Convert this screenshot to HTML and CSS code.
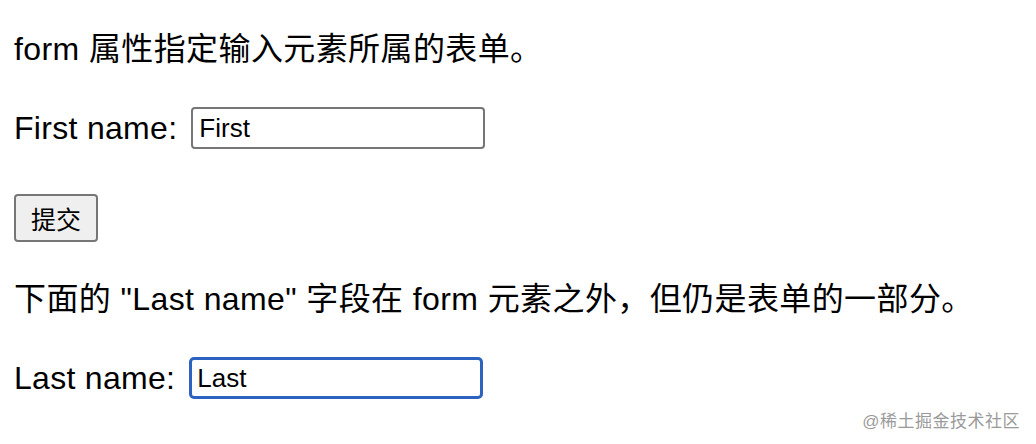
FILE: index.html
```html
<!DOCTYPE html>
<html lang="zh">
<head>
    <meta charset="UTF-8">
    <title>form 属性</title>
    <link rel="stylesheet" href="styles.css">
</head>
<body>
    <div class="page">
        <p class="note">form 属性指定输入元素所属的表单。</p>

        <form id="form1" class="demoForm">
            <div class="row">
                <label for="fname">First name:</label>
                <input type="text" id="fname" name="fname" class="field" value="First">
            </div>
            <div class="submitRow">
                <input type="submit" class="submitBtn" value="提交">
            </div>
        </form>

        <p class="note">下面的 "Last name" 字段在 form 元素之外，但仍是表单的一部分。</p>

        <div class="row">
            <label for="lname">Last name:</label>
            <input type="text" id="lname" name="lname" form="form1" class="field focused" value="Last">
        </div>
    </div>

    <div class="watermark">@稀土掘金技术社区</div>
</body>
</html>
```

FILE: styles.css
```css
body {
    margin: 0;
    font-family: "Liberation Sans", "Noto Sans CJK SC", sans-serif;
    font-size: 32px;
    color: #000;
    background-color: #fff;
}

.page {
    padding: 31px 14px 0;
}

.note {
    margin: 0;
    line-height: 36px;
    letter-spacing: 0.4px;
}

.demoForm {
    margin: 0;
}

.row {
    display: flex;
    align-items: center;
    gap: 14px;
    margin-top: 40px;
    line-height: 36px;
    letter-spacing: 0.3px;
}

.field {
    box-sizing: border-box;
    width: 294px;
    height: 42px;
    padding: 2px 6px;
    border: 2px solid #767676;
    border-radius: 4px;
    font-family: "Liberation Sans", "Noto Sans CJK SC", sans-serif;
    font-size: 26px;
    color: #000;
    background-color: #fff;
}

.focused {
    border: 3px solid #2c62c0;
    border-radius: 5px;
    padding: 1px 5px;
    outline: none;
}

.submitRow {
    margin-top: 45px;
    margin-bottom: 39px;
}

.submitBtn {
    box-sizing: border-box;
    width: 84px;
    height: 48px;
    padding: 0;
    border: 2px solid #767676;
    border-radius: 4px;
    background-color: #efefef;
    font-family: "Liberation Sans", "Noto Sans CJK SC", sans-serif;
    font-size: 25px;
    color: #000;
    cursor: pointer;
}

.watermark {
    position: absolute;
    right: 16px;
    bottom: 12px;
    font-size: 17px;
    color: #9a9a9a;
    letter-spacing: 0.5px;
}
```
